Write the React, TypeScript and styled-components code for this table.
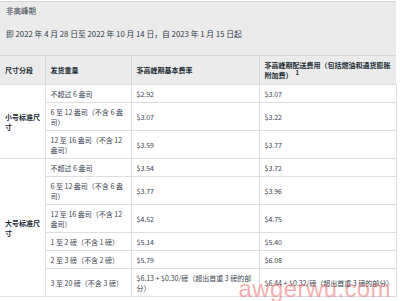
import styled, { createGlobalStyle } from 'styled-components';

const GlobalStyle = createGlobalStyle`
  html, body {
    margin: 0;
    padding: 0;
    background: #fff;
  }
  body {
    font-family: "Noto Sans CJK SC", "Noto Sans", sans-serif;
    color: #333;
  }
`;

const Page = styled.div`
  position: relative;
  width: 400px;
  height: 301px;
  overflow: hidden;
  padding-top: 1px;
  box-sizing: border-box;
`;

const Panel = styled.section`
  width: 396px;
  background: #ebebeb;
  border-top: 1px solid #d4d4d4;
`;

const Intro = styled.div`
  padding: 4px 6px 16px;
  border-bottom: 1px solid #d4d4d4;
`;

const Title = styled.h4`
  margin: 0;
  font-size: 7.5px;
  line-height: 10px;
  font-weight: 400;
  color: #2f3b48;
`;

const Period = styled.p`
  margin: 13px 0 0;
  font-size: 7.8px;
  line-height: 10px;
  color: #2f3b48;
`;

const Table = styled.table`
  width: 396px;
  border-collapse: collapse;
  table-layout: fixed;
  font-size: 7px;
  line-height: 10px;
`;

const Th = styled.th`
  background: #ebebeb;
  font-weight: 700;
  text-align: left;
  vertical-align: middle;
  padding: 4px 3px 4px 5px;
  border-left: 1px solid #d6d6d6;
  color: #222b35;

  &:first-child {
    border-left: none;
  }
`;

const NoWrap = styled.span`
  white-space: nowrap;

  sup {
    font-size: 6px;
    line-height: 0;
    margin-left: 3px;
  }
`;

const Td = styled.td<{ $label?: boolean }>`
  background: #fff;
  text-align: left;
  vertical-align: middle;
  padding: 3.5px 3px 3.5px 5px;
  border: 1px solid #dedede;
  color: ${(p) => (p.$label ? '#222b35' : '#3a4350')};
  font-weight: ${(p) => (p.$label ? 700 : 400)};

  &:first-child {
    border-left: none;
  }
`;

const Watermark = styled.div`
  position: absolute;
  right: 9px;
  bottom: 0;
  font-family: "Liberation Sans", Arial, sans-serif;
  font-size: 24px;
  line-height: 1;
  letter-spacing: 0.4px;
  color: rgba(238, 96, 96, 0.5);
  pointer-events: none;
`;

type Row = { weight: string; base: string; fee: string };
type Group = { name: string; rows: Row[] };

const groups: Group[] = [
  {
    name: '小号标准尺寸',
    rows: [
      { weight: '不超过 6 盎司', base: '$2.92', fee: '$3.07' },
      { weight: '6 至 12 盎司（不含 6 盎司）', base: '$3.07', fee: '$3.22' },
      { weight: '12 至 16 盎司（不含 12 盎司）', base: '$3.59', fee: '$3.77' },
    ],
  },
  {
    name: '大号标准尺寸',
    rows: [
      { weight: '不超过 6 盎司', base: '$3.54', fee: '$3.72' },
      { weight: '6 至 12 盎司（不含 6 盎司）', base: '$3.77', fee: '$3.96' },
      { weight: '12 至 16 盎司（不含 12 盎司）', base: '$4.52', fee: '$4.75' },
      { weight: '1 至 2 磅（不含 1 磅）', base: '$5.14', fee: '$5.40' },
      { weight: '2 至 3 磅（不含 2 磅）', base: '$5.79', fee: '$6.08' },
      {
        weight: '3 至 20 磅（不含 3 磅）',
        base: '$6.13 + $0.30/磅（超出首重 3 磅的部分）',
        fee: '$6.44 + $0.32/磅（超出首重 3 磅的部分）',
      },
    ],
  },
];

export default function App() {
  return (
    <Page>
      <GlobalStyle />
      <Panel>
        <Intro>
          <Title>非高峰期</Title>
          <Period>即 2022 年 4 月 28 日至 2022 年 10 月 14 日，自 2023 年 1 月 15 日起</Period>
        </Intro>
        <Table>
          <colgroup>
            <col style={{ width: 45 }} />
            <col style={{ width: 86 }} />
            <col style={{ width: 128 }} />
            <col style={{ width: 137 }} />
          </colgroup>
          <thead>
            <tr>
              <Th>尺寸分段</Th>
              <Th>发货重量</Th>
              <Th>非高峰期基本费率</Th>
              <Th>
                非高峰期配送费用（包括燃油和通货膨胀
                <NoWrap>
                  附加费）<sup>1</sup>
                </NoWrap>
              </Th>
            </tr>
          </thead>
          <tbody>
            {groups.map((g) =>
              g.rows.map((r, i) => (
                <tr key={g.name + i}>
                  {i === 0 && (
                    <Td $label rowSpan={g.rows.length}>
                      {g.name}
                    </Td>
                  )}
                  <Td>{r.weight}</Td>
                  <Td>{r.base}</Td>
                  <Td>{r.fee}</Td>
                </tr>
              ))
            )}
          </tbody>
        </Table>
      </Panel>
      <Watermark>awgerwu.com</Watermark>
    </Page>
  );
}
